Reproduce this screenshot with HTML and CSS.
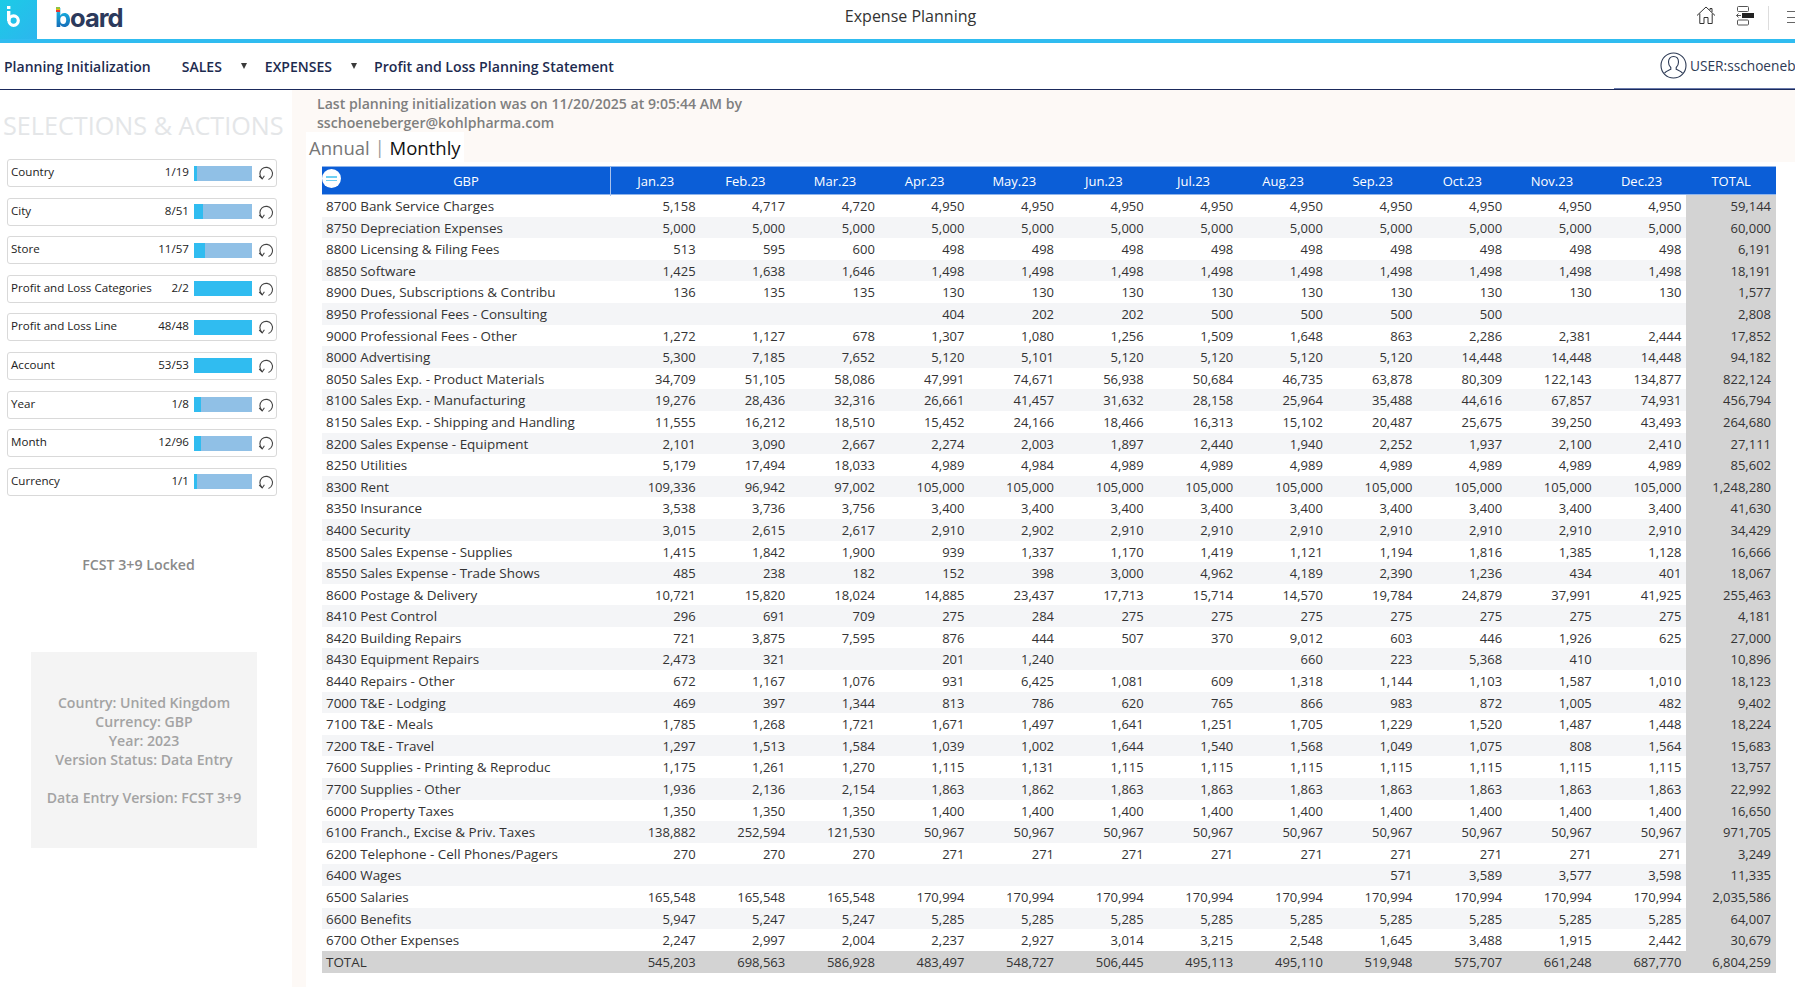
FILE: index.html
```html
<!DOCTYPE html>
<html lang="en">
<head>
<meta charset="utf-8">
<title>Expense Planning</title>
<link rel="stylesheet" href="styles.css">
</head>
<body>
<header class="topbar">
  <div class="tile">
    <svg class="tile-b" width="16" height="22" viewBox="0 0 16 22"><rect x="1" y="0" width="3.4" height="3" fill="#fff"/><path d="M2.7 5V15" stroke="#fff" stroke-width="3.4" fill="none"/><circle cx="7.6" cy="14.6" r="4.7" stroke="#fff" stroke-width="3.2" fill="none"/></svg>
  </div>
  <div class="logo"><span class="stripes"></span><span class="logo-b">b</span>oard</div>
  <div class="app-title">Expense Planning</div>
  <div class="top-icons">
    <svg class="ic-home" width="20" height="19" viewBox="0 0 20 19"><path d="M1 9.5L10 1l9 8.5M3.8 7.5V17.500H8V11.500h4V17.500h4.200V7.500M14 4V2.500h2V6" fill="none" stroke="#333" stroke-width="1"/></svg>
    <svg class="ic-layout" width="19" height="20" viewBox="0 0 19 20"><rect x="1.500" y="0.500" width="11" height="5" rx="1" fill="none" stroke="#555"/><rect x="6" y="7" width="12" height="5" fill="#222"/><path d="M0.500 9.500H5M2.500 7.500l-2 2 2 2" fill="none" stroke="#555"/><rect x="1.500" y="14" width="11" height="5" rx="1" fill="none" stroke="#555"/></svg>
    <span class="divider"></span>
    <span class="burger"><i></i><i></i><i></i></span>
  </div>
</header>

<nav class="nav">
  <a class="nav-item plan">Planning Initialization</a>
  <a class="nav-item sales">SALES</a><span class="caret c1"></span>
  <a class="nav-item expenses">EXPENSES</a><span class="caret c2"></span>
  <a class="nav-item pl">Profit and Loss Planning Statement</a>
  <div class="user">
    <svg width="27" height="27" viewBox="0 0 27 27"><circle cx="13.500" cy="13.500" r="12.500" fill="none" stroke="#2d3a55" stroke-width="1.100"/><path d="M13.500 4.500c-3.200 0-5 2.400-5 5.500 0 2.300 1 4.400 2.300 5.500v1.800c-2 1-5 1.800-6.300 3.800M13.500 4.500c3.200 0 5 2.400 5 5.500 0 2.300-1 4.400-2.300 5.500v1.800c2 1 5 1.800 6.300 3.800" fill="none" stroke="#2d3a55" stroke-width="1.100"/></svg>
    <span class="user-name">USER:sschoeneb</span>
  </div>
</nav>

<div class="page">
  <aside class="side">
    <h2 class="side-title">SELECTIONS &amp; ACTIONS</h2>
    <ul class="filters">
      <li class="filter"><span class="f-label">Country</span><span class="f-count">1/19</span><span class="f-bar"><span class="f-fill" style="width:5%"></span></span><svg class="f-reset" width="16" height="16" viewBox="0 0 16 16"><path d="M10.500 14.500A6.300 6.300 0 1 0 4.300 13.600" fill="none" stroke="#444" stroke-width="1.100"/><path d="M1.200 11l3 3 2.200-3.200" fill="none" stroke="#444" stroke-width="1.100"/></svg></li>
      <li class="filter"><span class="f-label">City</span><span class="f-count">8/51</span><span class="f-bar"><span class="f-fill" style="width:16%"></span></span><svg class="f-reset" width="16" height="16" viewBox="0 0 16 16"><path d="M10.500 14.500A6.300 6.300 0 1 0 4.300 13.600" fill="none" stroke="#444" stroke-width="1.100"/><path d="M1.200 11l3 3 2.200-3.200" fill="none" stroke="#444" stroke-width="1.100"/></svg></li>
      <li class="filter"><span class="f-label">Store</span><span class="f-count">11/57</span><span class="f-bar"><span class="f-fill" style="width:19%"></span></span><svg class="f-reset" width="16" height="16" viewBox="0 0 16 16"><path d="M10.500 14.500A6.300 6.300 0 1 0 4.300 13.600" fill="none" stroke="#444" stroke-width="1.100"/><path d="M1.200 11l3 3 2.200-3.200" fill="none" stroke="#444" stroke-width="1.100"/></svg></li>
      <li class="filter"><span class="f-label">Profit and Loss Categories</span><span class="f-count">2/2</span><span class="f-bar"><span class="f-fill" style="width:100%"></span></span><svg class="f-reset" width="16" height="16" viewBox="0 0 16 16"><path d="M10.500 14.500A6.300 6.300 0 1 0 4.300 13.600" fill="none" stroke="#444" stroke-width="1.100"/><path d="M1.200 11l3 3 2.200-3.200" fill="none" stroke="#444" stroke-width="1.100"/></svg></li>
      <li class="filter"><span class="f-label">Profit and Loss Line</span><span class="f-count">48/48</span><span class="f-bar"><span class="f-fill" style="width:100%"></span></span><svg class="f-reset" width="16" height="16" viewBox="0 0 16 16"><path d="M10.500 14.500A6.300 6.300 0 1 0 4.300 13.600" fill="none" stroke="#444" stroke-width="1.100"/><path d="M1.200 11l3 3 2.200-3.200" fill="none" stroke="#444" stroke-width="1.100"/></svg></li>
      <li class="filter"><span class="f-label">Account</span><span class="f-count">53/53</span><span class="f-bar"><span class="f-fill" style="width:100%"></span></span><svg class="f-reset" width="16" height="16" viewBox="0 0 16 16"><path d="M10.500 14.500A6.300 6.300 0 1 0 4.300 13.600" fill="none" stroke="#444" stroke-width="1.100"/><path d="M1.200 11l3 3 2.200-3.200" fill="none" stroke="#444" stroke-width="1.100"/></svg></li>
      <li class="filter"><span class="f-label">Year</span><span class="f-count">1/8</span><span class="f-bar"><span class="f-fill" style="width:12.500%"></span></span><svg class="f-reset" width="16" height="16" viewBox="0 0 16 16"><path d="M10.500 14.500A6.300 6.300 0 1 0 4.300 13.600" fill="none" stroke="#444" stroke-width="1.100"/><path d="M1.200 11l3 3 2.200-3.200" fill="none" stroke="#444" stroke-width="1.100"/></svg></li>
      <li class="filter"><span class="f-label">Month</span><span class="f-count">12/96</span><span class="f-bar"><span class="f-fill" style="width:12.500%"></span></span><svg class="f-reset" width="16" height="16" viewBox="0 0 16 16"><path d="M10.500 14.500A6.300 6.300 0 1 0 4.300 13.600" fill="none" stroke="#444" stroke-width="1.100"/><path d="M1.200 11l3 3 2.200-3.200" fill="none" stroke="#444" stroke-width="1.100"/></svg></li>
      <li class="filter"><span class="f-label">Currency</span><span class="f-count">1/1</span><span class="f-bar"><span class="f-fill" style="width:5%"></span></span><svg class="f-reset" width="16" height="16" viewBox="0 0 16 16"><path d="M10.500 14.500A6.300 6.300 0 1 0 4.300 13.600" fill="none" stroke="#444" stroke-width="1.100"/><path d="M1.200 11l3 3 2.200-3.200" fill="none" stroke="#444" stroke-width="1.100"/></svg></li>
    </ul>
    <div class="locked">FCST 3+9 Locked</div>
    <div class="info">
      Country: United Kingdom<br>Currency: GBP<br>Year: 2023<br>Version Status: Data Entry<br><br>Data Entry Version: FCST 3+9
    </div>
  </aside>

  <main class="main">
    <p class="notice">Last planning initialization was on 11/20/2025 at 9:05:44 AM by<br>sschoeneberger@kohlpharma.com</p>
    <div class="tabs"><span class="tab">Annual</span><span class="tab-sep">|</span><span class="tab active">Monthly</span></div>
    <div class="panel">
      <table class="grid">
        <thead>
          <tr class="head"><th class="name"><span class="collapse"><i></i><i></i></span>GBP</th><th>Jan.23</th><th>Feb.23</th><th>Mar.23</th><th>Apr.23</th><th>May.23</th><th>Jun.23</th><th>Jul.23</th><th>Aug.23</th><th>Sep.23</th><th>Oct.23</th><th>Nov.23</th><th>Dec.23</th><th>TOTAL</th></tr>
        </thead>
        <tbody>
          <tr><td>8700 Bank Service Charges</td><td>5,158</td><td>4,717</td><td>4,720</td><td>4,950</td><td>4,950</td><td>4,950</td><td>4,950</td><td>4,950</td><td>4,950</td><td>4,950</td><td>4,950</td><td>4,950</td><td>59,144</td></tr>
          <tr><td>8750 Depreciation Expenses</td><td>5,000</td><td>5,000</td><td>5,000</td><td>5,000</td><td>5,000</td><td>5,000</td><td>5,000</td><td>5,000</td><td>5,000</td><td>5,000</td><td>5,000</td><td>5,000</td><td>60,000</td></tr>
          <tr><td>8800 Licensing &amp; Filing Fees</td><td>513</td><td>595</td><td>600</td><td>498</td><td>498</td><td>498</td><td>498</td><td>498</td><td>498</td><td>498</td><td>498</td><td>498</td><td>6,191</td></tr>
          <tr><td>8850 Software</td><td>1,425</td><td>1,638</td><td>1,646</td><td>1,498</td><td>1,498</td><td>1,498</td><td>1,498</td><td>1,498</td><td>1,498</td><td>1,498</td><td>1,498</td><td>1,498</td><td>18,191</td></tr>
          <tr><td>8900 Dues, Subscriptions &amp; Contribu</td><td>136</td><td>135</td><td>135</td><td>130</td><td>130</td><td>130</td><td>130</td><td>130</td><td>130</td><td>130</td><td>130</td><td>130</td><td>1,577</td></tr>
          <tr><td>8950 Professional Fees - Consulting</td><td></td><td></td><td></td><td>404</td><td>202</td><td>202</td><td>500</td><td>500</td><td>500</td><td>500</td><td></td><td></td><td>2,808</td></tr>
          <tr><td>9000 Professional Fees - Other</td><td>1,272</td><td>1,127</td><td>678</td><td>1,307</td><td>1,080</td><td>1,256</td><td>1,509</td><td>1,648</td><td>863</td><td>2,286</td><td>2,381</td><td>2,444</td><td>17,852</td></tr>
          <tr><td>8000 Advertising</td><td>5,300</td><td>7,185</td><td>7,652</td><td>5,120</td><td>5,101</td><td>5,120</td><td>5,120</td><td>5,120</td><td>5,120</td><td>14,448</td><td>14,448</td><td>14,448</td><td>94,182</td></tr>
          <tr><td>8050 Sales Exp. - Product Materials</td><td>34,709</td><td>51,105</td><td>58,086</td><td>47,991</td><td>74,671</td><td>56,938</td><td>50,684</td><td>46,735</td><td>63,878</td><td>80,309</td><td>122,143</td><td>134,877</td><td>822,124</td></tr>
          <tr><td>8100 Sales Exp. - Manufacturing</td><td>19,276</td><td>28,436</td><td>32,316</td><td>26,661</td><td>41,457</td><td>31,632</td><td>28,158</td><td>25,964</td><td>35,488</td><td>44,616</td><td>67,857</td><td>74,931</td><td>456,794</td></tr>
          <tr><td>8150 Sales Exp. - Shipping and Handling</td><td>11,555</td><td>16,212</td><td>18,510</td><td>15,452</td><td>24,166</td><td>18,466</td><td>16,313</td><td>15,102</td><td>20,487</td><td>25,675</td><td>39,250</td><td>43,493</td><td>264,680</td></tr>
          <tr><td>8200 Sales Expense - Equipment</td><td>2,101</td><td>3,090</td><td>2,667</td><td>2,274</td><td>2,003</td><td>1,897</td><td>2,440</td><td>1,940</td><td>2,252</td><td>1,937</td><td>2,100</td><td>2,410</td><td>27,111</td></tr>
          <tr><td>8250 Utilities</td><td>5,179</td><td>17,494</td><td>18,033</td><td>4,989</td><td>4,984</td><td>4,989</td><td>4,989</td><td>4,989</td><td>4,989</td><td>4,989</td><td>4,989</td><td>4,989</td><td>85,602</td></tr>
          <tr><td>8300 Rent</td><td>109,336</td><td>96,942</td><td>97,002</td><td>105,000</td><td>105,000</td><td>105,000</td><td>105,000</td><td>105,000</td><td>105,000</td><td>105,000</td><td>105,000</td><td>105,000</td><td>1,248,280</td></tr>
          <tr><td>8350 Insurance</td><td>3,538</td><td>3,736</td><td>3,756</td><td>3,400</td><td>3,400</td><td>3,400</td><td>3,400</td><td>3,400</td><td>3,400</td><td>3,400</td><td>3,400</td><td>3,400</td><td>41,630</td></tr>
          <tr><td>8400 Security</td><td>3,015</td><td>2,615</td><td>2,617</td><td>2,910</td><td>2,902</td><td>2,910</td><td>2,910</td><td>2,910</td><td>2,910</td><td>2,910</td><td>2,910</td><td>2,910</td><td>34,429</td></tr>
          <tr><td>8500 Sales Expense - Supplies</td><td>1,415</td><td>1,842</td><td>1,900</td><td>939</td><td>1,337</td><td>1,170</td><td>1,419</td><td>1,121</td><td>1,194</td><td>1,816</td><td>1,385</td><td>1,128</td><td>16,666</td></tr>
          <tr><td>8550 Sales Expense - Trade Shows</td><td>485</td><td>238</td><td>182</td><td>152</td><td>398</td><td>3,000</td><td>4,962</td><td>4,189</td><td>2,390</td><td>1,236</td><td>434</td><td>401</td><td>18,067</td></tr>
          <tr><td>8600 Postage &amp; Delivery</td><td>10,721</td><td>15,820</td><td>18,024</td><td>14,885</td><td>23,437</td><td>17,713</td><td>15,714</td><td>14,570</td><td>19,784</td><td>24,879</td><td>37,991</td><td>41,925</td><td>255,463</td></tr>
          <tr><td>8410 Pest Control</td><td>296</td><td>691</td><td>709</td><td>275</td><td>284</td><td>275</td><td>275</td><td>275</td><td>275</td><td>275</td><td>275</td><td>275</td><td>4,181</td></tr>
          <tr><td>8420 Building Repairs</td><td>721</td><td>3,875</td><td>7,595</td><td>876</td><td>444</td><td>507</td><td>370</td><td>9,012</td><td>603</td><td>446</td><td>1,926</td><td>625</td><td>27,000</td></tr>
          <tr><td>8430 Equipment Repairs</td><td>2,473</td><td>321</td><td></td><td>201</td><td>1,240</td><td></td><td></td><td>660</td><td>223</td><td>5,368</td><td>410</td><td></td><td>10,896</td></tr>
          <tr><td>8440 Repairs - Other</td><td>672</td><td>1,167</td><td>1,076</td><td>931</td><td>6,425</td><td>1,081</td><td>609</td><td>1,318</td><td>1,144</td><td>1,103</td><td>1,587</td><td>1,010</td><td>18,123</td></tr>
          <tr><td>7000 T&amp;E - Lodging</td><td>469</td><td>397</td><td>1,344</td><td>813</td><td>786</td><td>620</td><td>765</td><td>866</td><td>983</td><td>872</td><td>1,005</td><td>482</td><td>9,402</td></tr>
          <tr><td>7100 T&amp;E - Meals</td><td>1,785</td><td>1,268</td><td>1,721</td><td>1,671</td><td>1,497</td><td>1,641</td><td>1,251</td><td>1,705</td><td>1,229</td><td>1,520</td><td>1,487</td><td>1,448</td><td>18,224</td></tr>
          <tr><td>7200 T&amp;E - Travel</td><td>1,297</td><td>1,513</td><td>1,584</td><td>1,039</td><td>1,002</td><td>1,644</td><td>1,540</td><td>1,568</td><td>1,049</td><td>1,075</td><td>808</td><td>1,564</td><td>15,683</td></tr>
          <tr><td>7600 Supplies - Printing &amp; Reproduc</td><td>1,175</td><td>1,261</td><td>1,270</td><td>1,115</td><td>1,131</td><td>1,115</td><td>1,115</td><td>1,115</td><td>1,115</td><td>1,115</td><td>1,115</td><td>1,115</td><td>13,757</td></tr>
          <tr><td>7700 Supplies - Other</td><td>1,936</td><td>2,136</td><td>2,154</td><td>1,863</td><td>1,862</td><td>1,863</td><td>1,863</td><td>1,863</td><td>1,863</td><td>1,863</td><td>1,863</td><td>1,863</td><td>22,992</td></tr>
          <tr><td>6000 Property Taxes</td><td>1,350</td><td>1,350</td><td>1,350</td><td>1,400</td><td>1,400</td><td>1,400</td><td>1,400</td><td>1,400</td><td>1,400</td><td>1,400</td><td>1,400</td><td>1,400</td><td>16,650</td></tr>
          <tr><td>6100 Franch., Excise &amp; Priv. Taxes</td><td>138,882</td><td>252,594</td><td>121,530</td><td>50,967</td><td>50,967</td><td>50,967</td><td>50,967</td><td>50,967</td><td>50,967</td><td>50,967</td><td>50,967</td><td>50,967</td><td>971,705</td></tr>
          <tr><td>6200 Telephone - Cell Phones/Pagers</td><td>270</td><td>270</td><td>270</td><td>271</td><td>271</td><td>271</td><td>271</td><td>271</td><td>271</td><td>271</td><td>271</td><td>271</td><td>3,249</td></tr>
          <tr><td>6400 Wages</td><td></td><td></td><td></td><td></td><td></td><td></td><td></td><td></td><td>571</td><td>3,589</td><td>3,577</td><td>3,598</td><td>11,335</td></tr>
          <tr><td>6500 Salaries</td><td>165,548</td><td>165,548</td><td>165,548</td><td>170,994</td><td>170,994</td><td>170,994</td><td>170,994</td><td>170,994</td><td>170,994</td><td>170,994</td><td>170,994</td><td>170,994</td><td>2,035,586</td></tr>
          <tr><td>6600 Benefits</td><td>5,947</td><td>5,247</td><td>5,247</td><td>5,285</td><td>5,285</td><td>5,285</td><td>5,285</td><td>5,285</td><td>5,285</td><td>5,285</td><td>5,285</td><td>5,285</td><td>64,007</td></tr>
          <tr><td>6700 Other Expenses</td><td>2,247</td><td>2,997</td><td>2,004</td><td>2,237</td><td>2,927</td><td>3,014</td><td>3,215</td><td>2,548</td><td>1,645</td><td>3,488</td><td>1,915</td><td>2,442</td><td>30,679</td></tr>
        </tbody>
        <tfoot>
          <tr class="foot"><td>TOTAL</td><td>545,203</td><td>698,563</td><td>586,928</td><td>483,497</td><td>548,727</td><td>506,445</td><td>495,113</td><td>495,110</td><td>519,948</td><td>575,707</td><td>661,248</td><td>687,770</td><td>6,804,259</td></tr>
        </tfoot>
      </table>
    </div>
  </main>
</div>
</body>
</html>
```
FILE: styles.css
```css
* { box-sizing: border-box; }
html, body { margin: 0; height: 100%; overflow: hidden; background: #fff; }
body { font-family: "Open Sans", "Liberation Sans", sans-serif; color: #333; }

.topbar { position: relative; display: flex; align-items: flex-start; height: 43px; border-bottom: 4px solid #30bcf0; }
.tile { width: 37px; height: 39px; background: linear-gradient(135deg, #1ccbe6, #2cb6ee); padding: 6px 0 0 6px; }
.tile-b { display: block; }
.logo { position: relative; margin: 2px 0 0 18px; font-family: "Inter", "Open Sans", sans-serif; font-weight: 700; font-size: 25.500px; line-height: 32px; letter-spacing: -1px; color: #2c3a5c; }
.logo-b { color: #1378c8; background: linear-gradient(#16b0e0 30%, #1560b0 90%); -webkit-background-clip: text; background-clip: text; -webkit-text-fill-color: transparent; }
.stripes { position: absolute; left: 1px; top: 5px; width: 4px; height: 5px; background: linear-gradient(#8bc34a 0 33%, #f4b400 33% 66%, #e53935 66%); }
.app-title { position: absolute; left: 26px; right: 0; top: 4px; text-align: center; font-size: 16px; line-height: 24px; color: #333; }
.top-icons { margin-left: auto; display: flex; align-items: flex-start; height: 39px; }
.ic-home { margin: 6px 0 0 0; }
.ic-layout { margin: 6px 0 0 20px; }
.divider { width: 1px; height: 24px; margin: 6px 0 0 13px; background: #ddd; }
.burger { width: 8px; margin: 11px 0 0 18px; display: flex; flex-direction: column; gap: 4.500px; }
.burger i { display: block; height: 1px; background: #666; }

.nav { position: relative; display: flex; align-items: center; height: 47px; border-bottom: 1px solid #1b2a5c; padding-left: 4px; font-size: 14px; font-weight: 600; color: #1d2b4f; white-space: nowrap; overflow: hidden; }
.nav::after { content: ""; position: absolute; left: 1614px; right: 0; bottom: -1px; height: 2px; background: #6a7aaa; }
.nav-item { display: block; }
.sales { margin-left: 31px; }
.expenses { margin-left: 18px; }
.pl { margin-left: 17px; font-size: 14.150px; }
.caret { width: 0; height: 0; margin-left: 19px; border-left: 3.500px solid transparent; border-right: 3.500px solid transparent; border-top: 6px solid #3a3a3a; }
.user { position: absolute; left: 1660px; top: 9px; display: flex; align-items: center; gap: 3px; font-weight: 400; font-size: 13.700px; color: #2d3a55; }
.user svg { display: block; }

.page { display: flex; height: calc(100% - 90px); }
.side { width: 292px; flex: none; background: #fff; }
.side-title { margin: 17px 0 0 3px; font-size: 25.200px; line-height: 36px; font-weight: 400; color: #e4e6e8; white-space: nowrap; }
.filters { list-style: none; margin: 16px 0 0 7px; padding: 0; width: 270px; display: flex; flex-direction: column; gap: 10.600px; }
.filter { display: flex; align-items: center; height: 28px; border: 1px solid #d9d9d9; border-radius: 3px; padding: 0 2px 0 3px; font-size: 11.600px; line-height: 14px; color: #222; }
.f-label, .f-count { position: relative; top: -1px; }
.f-label { flex: 1; white-space: nowrap; }
.f-count { margin-right: 5px; }
.f-bar { display: block; width: 58px; height: 15px; background: #90c0e6; }
.f-fill { display: block; height: 100%; background: #30bcf0; }
.f-reset { margin-left: 6px; flex: none; }
.locked { margin: 59px 0 0 0; width: 277px; text-align: center; font-size: 14.200px; line-height: 20px; font-weight: 600; color: #8a8a8a; }
.info { margin: 77px 0 0 31px; width: 226px; height: 196px; padding: 41px 0 0; background: #f4f4f4; text-align: center; font-size: 14.100px; line-height: 19px; font-weight: 600; color: #a3a3a3; }

.main { flex: 1; min-width: 0; background: #fdf9f6; padding-left: 14px; display: flex; flex-direction: column; }
.notice { margin: 4px 0 0 11px; height: 38px; font-size: 14.100px; line-height: 19px; font-weight: 600; color: #7f7f7f; }
.tabs { display: flex; align-items: center; align-self: flex-start; height: 30px; padding-left: 3px; padding-right: 3px; background: #fff; font-size: 18.500px; color: #777; }
.tab.active { color: #111; }
.tab-sep { margin: 0 5px; font-size: 18px; color: #999; }
.panel { flex: 1; background: #fff; padding: 4px 19px 0 16px; }

.grid { display: block; border-collapse: collapse; font-size: 13px; color: #333; }
.grid thead, .grid tbody, .grid tfoot { display: block; }
.grid tr { display: grid; grid-template-columns: 289px repeat(13, 1fr); width: 1454px; height: 21.600px; }
.grid td, .grid th { display: block; padding: 1px 5px 0 0; text-align: right; font-weight: 400; line-height: 21px; white-space: nowrap; overflow: hidden; }
.grid td:first-child { padding: 1px 0 0 4px; text-align: left; font-size: 13.450px; }
.grid tbody tr:nth-child(even) { background: #f4f5f7; }
.grid tbody td:last-child { background: #d3d3d3; }
.grid tr.head { height: 29px; background: #0b5ed7; border-top: 1px solid #8fb4ea; border-bottom: 1px solid #8fb4ea; }
.grid th { padding: 0; text-align: center; color: #fff; line-height: 29px; }
.grid th.name { position: relative; border-right: 1px solid #a9c2ec; overflow: visible; }
.collapse { position: absolute; left: 0; top: 2px; width: 19px; height: 19px; border-radius: 50%; background: #fff; display: flex; flex-direction: column; justify-content: center; gap: 2px; padding: 0 4px; }
.collapse i { display: block; height: 1.500px; background: #6fd0f2; }
.grid tr.foot { height: 22px; background: #d3d3d3; }
```
